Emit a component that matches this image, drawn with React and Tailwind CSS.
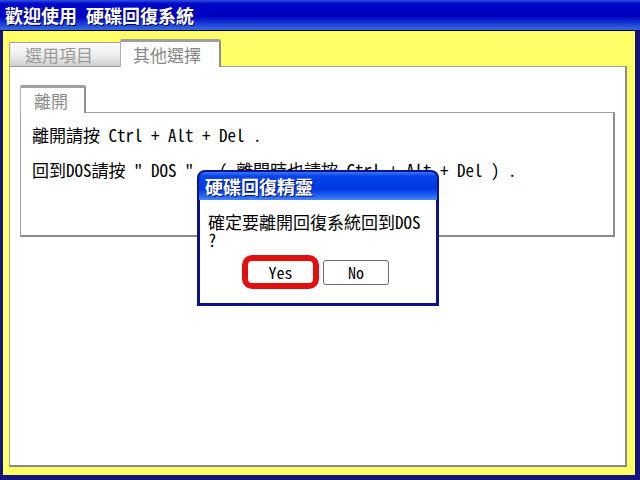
const mono = "font-['Noto_Sans_Mono_CJK_TC','DejaVu_Sans_Mono','Noto_Sans_CJK_TC',monospace]"

function Tabs() {
  return (
    <div className="h-[27px] shrink-0 flex items-end">
      <div className="w-[111px] h-[24px] border-t border-l border-[#a0a0a0] rounded-tl-[2px] bg-[linear-gradient(to_bottom,#fbfbfb,#ececec_55%,#cfcfcf)] flex items-center pl-[15px]">
        <span className={`${mono} text-[17px] leading-none text-[#9a9a9a]`}>選用項目</span>
      </div>
      <div className="w-[101px] h-[28px] -mb-px relative z-10 bg-white border-t-[3px] border-l border-r-2 border-t-[#a0a0a0] border-l-[#b0b0b0] border-r-[#909090] rounded-t-[2px] flex items-center pl-[12px]">
        <span className={`${mono} text-[17px] leading-none text-[#858585]`}>其他選擇</span>
      </div>
    </div>
  )
}

function GroupBox() {
  return (
    <div className="flex flex-col">
      <div className="h-[27px] flex items-end">
        <div className="w-[66px] h-[28px] -mb-px relative z-10 bg-white border-t-[3px] border-l border-r-2 border-t-[#a0a0a0] border-l-[#b0b0b0] border-r-[#909090] rounded-t-[2px] flex items-center pl-[13px]">
          <span className={`${mono} text-[17px] leading-none text-[#8a8a8a]`}>離開</span>
        </div>
      </div>
      <div className="h-[125px] bg-white border-t border-l border-r-2 border-b-2 border-t-[#a0a0a0] border-l-[#a0a0a0] border-r-[#8c8c8c] border-b-[#8c8c8c] pl-[11px] pt-[10px]">
        <p className={`${mono} text-[17px] leading-[24px] text-black whitespace-pre`}>離開請按 Ctrl + Alt + Del .</p>
        <p className={`${mono} text-[17px] leading-[24px] text-black whitespace-pre mt-[11px]`}>回到DOS請按 " DOS "   ( 離開時也請按 Ctrl + Alt + Del ) .</p>
      </div>
    </div>
  )
}

function Dialog() {
  return (
    <div className="absolute left-[197px] top-[170px] w-[242px] h-[136px] flex flex-col rounded-t-[8px] overflow-hidden bg-[#0a1488] border-2 border-[#0a1488] border-b-[3px]">
      <div className="h-[28px] shrink-0 bg-[linear-gradient(to_bottom,#3a74f8_0%,#0844ea_15%,#0038e0_60%,#2a68f2_88%,#4a86f8_100%)] flex items-center pl-[6px]">
        <span className={`${mono} text-[18px] leading-none font-bold text-white [text-shadow:1px_1px_0_#001070]`}>硬碟回復精靈</span>
      </div>
      <div className="flex-1 bg-white border-x border-[#0a1488] flex flex-col">
        <div className={`${mono} pl-[8px] pt-[13px] text-[17px] leading-[18px] text-black`}>
          <div>確定要離開回復系統回到DOS</div>
          <div>?</div>
        </div>
        <div className="flex items-center gap-[4px] pl-[42px] mt-[6px]">
          <div className="w-[77px] h-[34px] border-[6px] border-[#e21010] rounded-[10px] bg-white flex items-center justify-center">
            <span className={`${mono} text-[16px] leading-none text-black`}>Yes</span>
          </div>
          <div className="w-[66px] h-[25px] border border-[#6a6a6a] rounded-[3px] bg-white flex items-center justify-center">
            <span className={`${mono} text-[16px] leading-none text-black`}>No</span>
          </div>
        </div>
      </div>
    </div>
  )
}

export default function App() {
  return (
    <div className="w-[640px] h-[480px] relative flex flex-col bg-[#ffff66] overflow-hidden">
      <div className="h-[31px] shrink-0 border-b border-[#000030] bg-[linear-gradient(to_bottom,#3050e0_0%,#0008c8_12%,#0000c0_55%,#2454dc_88%,#3a66e6_100%)] flex items-center pl-[5px]">
        <span className={`${mono} text-[18px] leading-none font-bold text-white [text-shadow:1px_1px_0_#000050]`}>歡迎使用 硬碟回復系統</span>
      </div>
      <div className="flex-1 flex flex-col border-l-[3px] border-r-[5px] border-b-[5px] border-[#14147a] pt-[8px] pl-[6px] pr-[8px] pb-[8px]">
        <Tabs />
        <div className="flex-1 bg-white border-t border-l border-r-2 border-b-2 border-t-[#a0a0a0] border-l-[#a0a0a0] border-r-[#8a8a8a] border-b-[#8a8a8a] pl-[10px] pr-[10px] pt-[18px]">
          <GroupBox />
        </div>
      </div>
      <Dialog />
    </div>
  )
}
